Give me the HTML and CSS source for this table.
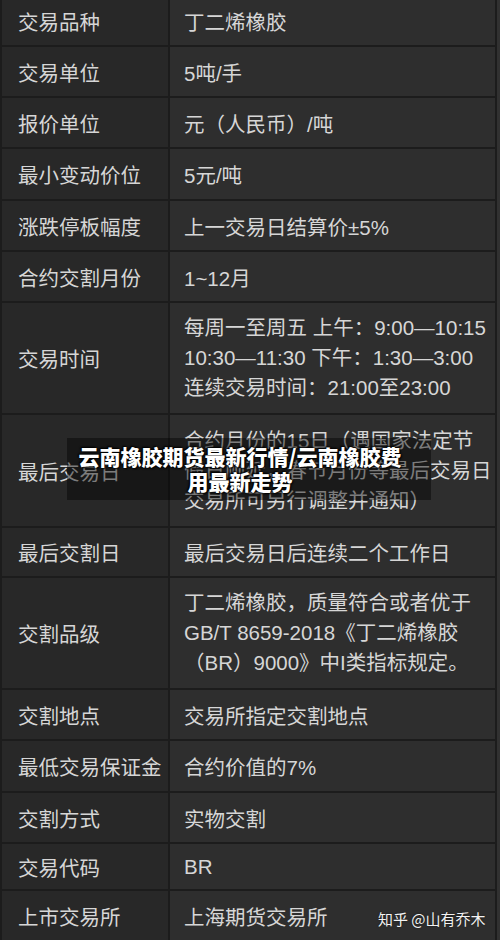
FILE: index.html
```html
<!DOCTYPE html>
<html lang="zh-CN">
<head>
<meta charset="utf-8">
<title>丁二烯橡胶期货合约</title>
<link rel="stylesheet" href="styles.css">
</head>
<body>
<div class="page">
  <div class="spec">
    <div class="k">交易品种</div><div class="v">丁二烯橡胶</div>
    <div class="k">交易单位</div><div class="v">5吨/手</div>
    <div class="k">报价单位</div><div class="v">元（人民币）/吨</div>
    <div class="k">最小变动价位</div><div class="v">5元/吨</div>
    <div class="k">涨跌停板幅度</div><div class="v">上一交易日结算价±5%</div>
    <div class="k">合约交割月份</div><div class="v">1~12月</div>
    <div class="k">交易时间</div><div class="v multi">每周一至周五 上午：9:00—10:15<br>10:30—11:30 下午：1:30—3:00<br>连续交易时间：21:00至23:00</div>
    <div class="k">最后交易日</div><div class="v multi">合约月份的15日（遇国家法定节<br>假日顺延，春节月份等最后交易日<br>交易所可另行调整并通知）</div>
    <div class="k">最后交割日</div><div class="v">最后交易日后连续二个工作日</div>
    <div class="k">交割品级</div><div class="v multi">丁二烯橡胶，质量符合或者优于<br>GB/T 8659-2018《丁二烯橡胶<br>（BR）9000》中I类指标规定。</div>
    <div class="k">交割地点</div><div class="v">交易所指定交割地点</div>
    <div class="k">最低交易保证金</div><div class="v">合约价值的7%</div>
    <div class="k">交割方式</div><div class="v">实物交割</div>
    <div class="k">交易代码</div><div class="v">BR</div>
    <div class="k">上市交易所</div><div class="v">上海期货交易所</div>
  </div>
  <div class="banner-bg"></div>
  <div class="banner">云南橡胶期货最新行情/云南橡胶费<br>用最新走势</div>
  <div class="mark">知乎 @山有乔木</div>
</div>
</body>
</html>
```
FILE: styles.css
```css
html, body {
  margin: 0;
  padding: 0;
}
body {
  background: #313131;
  width: 500px;
  height: 940px;
  overflow: hidden;
  font-family: "Liberation Sans", "Noto Sans CJK SC", sans-serif;
}
.page {
  position: relative;
  width: 500px;
  height: 940px;
  overflow: hidden;
}
.spec {
  display: grid;
  width: 497px;
  box-sizing: border-box;
  margin-top: -4px;
  padding: 0 2px;
  background: #1c1c1c;
  column-gap: 2px;
  row-gap: 2px;
  grid-template-columns: 166px 325px;
  grid-template-rows: 49px 49px 49px 50px 49px 49px 110px 111px 48px 110px 49px 50px 49px 45px 49px;
}
.k, .v {
  display: flex;
  align-items: center;
  font-size: 20.5px;
  color: #d6d6d6;
  white-space: nowrap;
}
.k {
  background: #282828;
  padding-left: 16px;
}
.v {
  background: #2e2e2e;
  padding-left: 14px;
}
.multi {
  line-height: 30px;
}
.banner-bg {
  position: absolute;
  left: 67px;
  top: 438px;
  width: 364px;
  height: 62px;
  background: rgba(0, 0, 0, 0.42);
}
.banner {
  position: absolute;
  left: 40px;
  top: 444px;
  width: 400px;
  text-align: center;
  font-family: "Noto Sans CJK SC", sans-serif;
  font-weight: 900;
  font-size: 21px;
  line-height: 25px;
  color: #ffffff;
  text-shadow: 0 0 2px #000, 1px 1px 2px #000, -1px -1px 2px #000;
}
.mark {
  position: absolute;
  left: 378px;
  top: 909px;
  font-family: "Noto Sans CJK SC", sans-serif;
  font-size: 15px;
  line-height: 20px;
  color: #f2f2f2;
  text-shadow: 0 0 2px rgba(0, 0, 0, 0.6);
}
```
